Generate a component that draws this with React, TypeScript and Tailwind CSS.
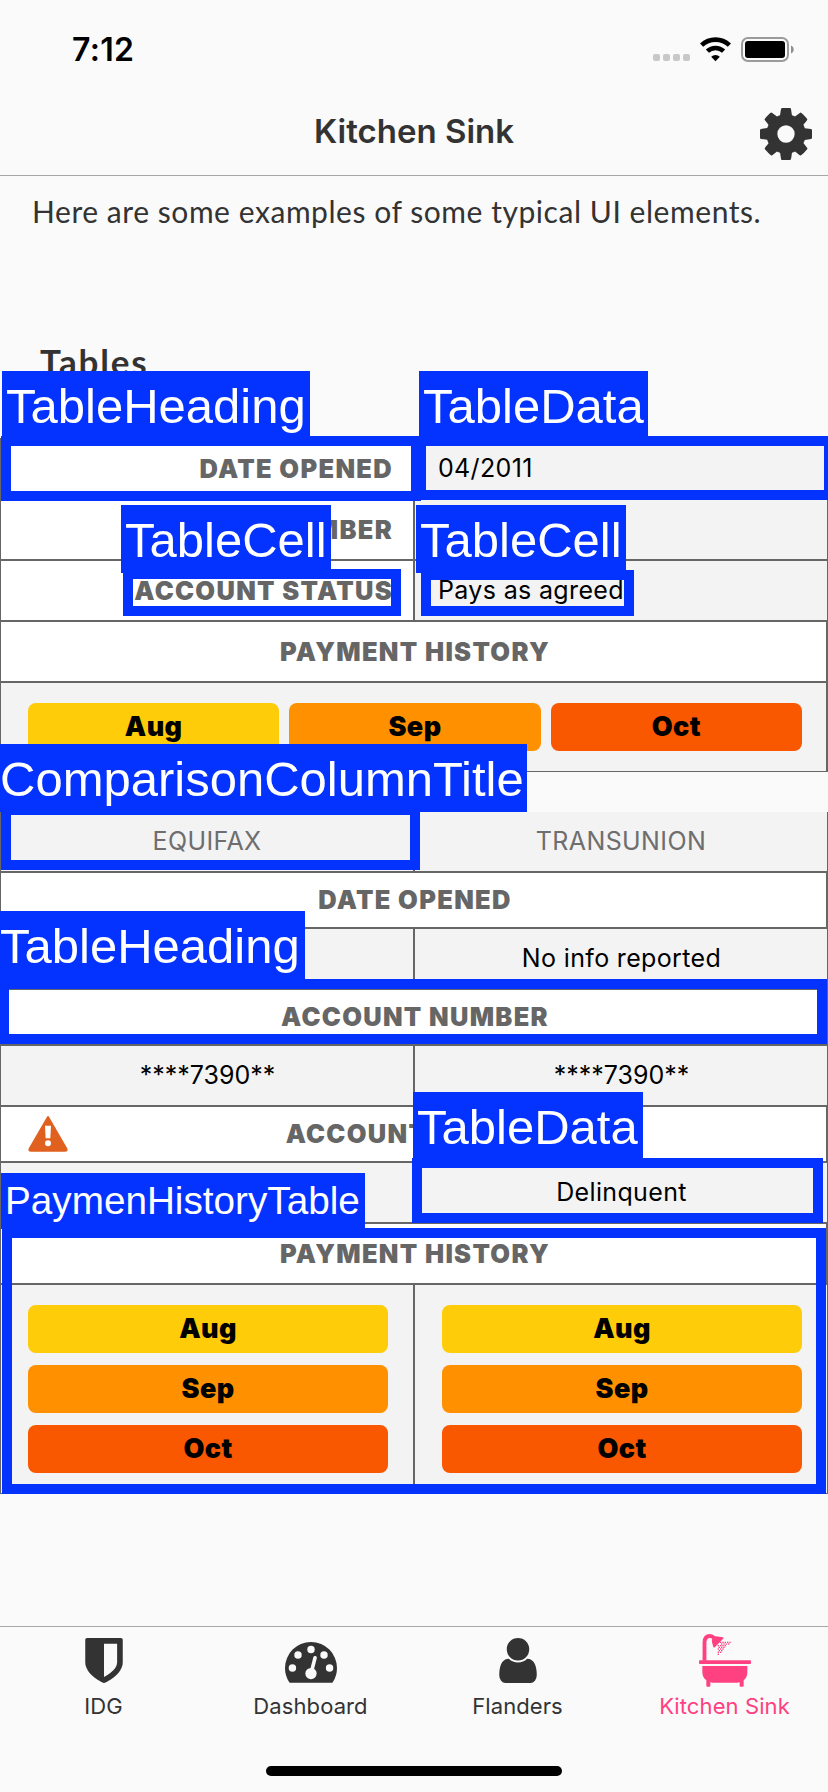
import type { ReactNode } from "react";

const INTER = "font-['Inter','Liberation_Sans',sans-serif]";

function StatusBar() {
  return (
    <div className="flex h-[88px] items-start justify-between pl-[72px] pr-[34px]">
      <span className="mt-[30px] text-[32px] font-semibold leading-[40px] tracking-[0.3px] text-black">7:12</span>
      <svg className="mt-[36px]" width="142" height="27" viewBox="652 36 142 27">
        {[653, 663, 673, 683].map((x) => (
          <rect key={x} x={x} y="54" width="7" height="7" rx="2" fill="#c8c8c8" />
        ))}
        <g fill="none" stroke="#000" strokeWidth="4.6">
          <path d="M701.6 45.2a20 20 0 0 1 27.8 0" />
          <path d="M707.4 51.2a11.8 11.8 0 0 1 16.2 0" />
        </g>
        <path d="M715.5 61.2l-4.3-4.4a6.2 6.2 0 0 1 8.6 0z" fill="#000" />
        <rect x="742" y="38" width="46" height="23" rx="6" fill="none" stroke="#9b9b9b" strokeWidth="2" />
        <rect x="745" y="41" width="40" height="17" rx="3" fill="#000" />
        <path d="M791 45.5c3.6 1.2 3.6 6.8 0 8z" fill="#8f8f8f" />
      </svg>
    </div>
  );
}

function CogIcon() {
  return (
    <svg width="52" height="52" viewBox="0 128 1536 1536" fill="#333">
      <path d="M1024 896q0-106-75-181t-181-75-181 75-75 181 75 181 181 75 181-75 75-181zm512-109v222q0 12-8 23t-20 13l-185 28q-19 54-39 91 35 50 107 138 10 12 10 25t-9 23q-27 37-99 108t-94 71q-12 0-26-9l-138-108q-44 23-91 38-16 136-29 186-7 28-36 28h-222q-14 0-24.5-8.5t-11.5-21.5l-28-184q-49-16-90-37l-141 107q-10 9-25 9-14 0-25-11-126-114-165-168-7-10-7-23 0-12 8-23 15-21 51-66.5t54-70.5q-27-50-41-99l-183-27q-13-2-21-12.5t-8-23.5v-222q0-12 8-23t19-13l186-28q14-46 39-92-40-57-107-138-10-12-10-24 0-10 9-23 26-36 98.5-107.5t94.5-71.5q13 0 26 10l138 107q44-23 91-38 16-136 29-186 7-28 36-28h222q14 0 24.5 8.5t11.5 21.5l28 184q49 16 90 37l142-107q9-9 24-9 13 0 25 10 129 119 165 170 7 8 7 22 0 12-8 23-15 21-51 66.5t-54 70.5q26 50 41 98l183 28q13 2 21 12.5t8 23.5z" />
    </svg>
  );
}

function ShieldIcon() {
  return (
    <svg width="38" height="45" viewBox="128 0 1280 1536" fill="#333">
      <path d="M1216 832v-640h-448v1137q119-63 213-137 235-184 235-360zm192-768v768q0 86-33.5 170.5t-83 150-118 127.5-126.5 103-121 77.5-89.5 49.5-42.5 20q-12 6-26 6t-26-6q-16-7-42.5-20t-89.5-49.5-121-77.5-126.5-103-118-127.5-83-150-33.5-170.5v-768q0-26 19-45t45-19h1152q26 0 45 19t19 45z" />
    </svg>
  );
}

function GaugeIcon() {
  return (
    <svg width="52" height="41" viewBox="0 128 1792 1413" fill="#333">
      <path d="M1792 1024q0 261-141 483-19 29-54 29h-1402q-35 0-54-29-141-221-141-483 0-182 71-348t191-286 286-191 348-71 348 71 286 191 191 286 71 348z" />
      <g fill="#fafafa">
        <circle cx="256" cy="1024" r="128" />
        <circle cx="448" cy="576" r="128" />
        <circle cx="896" cy="384" r="128" />
        <circle cx="1344" cy="576" r="128" />
        <circle cx="1536" cy="1024" r="128" />
        <circle cx="896" cy="1216" r="194" />
      </g>
      <path d="M925 1100L1036 672" stroke="#fafafa" strokeWidth="124" strokeLinecap="round" />
    </svg>
  );
}

function UserIcon() {
  return (
    <svg width="38" height="45" viewBox="0 0 1280 1536" fill="#333">
      <path d="M1280 1271q0 109-62.5 187t-150.5 78h-854q-88 0-150.5-78t-62.5-187q0-85 8.5-160.5t31.5-152 58.5-131 94-89 134.5-34.5q131 128 313 128t313-128q76 0 134.5 34.5t94 89 58.5 131 31.5 152 8.5 160.5zm-256-887q0 159-112.5 271.5t-271.5 112.5-271.5-112.5-112.5-271.5 112.5-271.5 271.5-112.5 271.5 112.5 112.5 271.5z" />
    </svg>
  );
}

const DROPS: [number, number][] = [
  [93, 25], [86, 25], [79, 25], [72, 25], [65, 25],
  [89, 30], [82, 30], [75, 30], [68, 30],
  [79, 35], [72, 35], [65, 35], [58, 35],
  [75, 40], [68, 40], [61, 40],
  [72, 45], [65, 45], [58, 45],
  [68, 50], [61, 50],
  [65, 55], [58, 55], [58, 61],
];

function BathIcon() {
  return (
    <svg width="52" height="53" viewBox="0 0 156 159" fill="#ff4081">
      <rect x="0" y="79" width="156" height="11" rx="3" />
      <path d="M10 96h135v18q0 16-11 25v16q0 3-3 3h-6q-3 0-3-3v-10q-3 1-8 1H42q-5 0-8-1v10q0 3-3 3h-6q-3 0-3-3v-16q-12-9-12-25z" />
      <path d="M16.500 80V26Q16.500 6 33 6Q40 6 45 12" fill="none" stroke="#ff4081" strokeWidth="11.500" />
      <path d="M42 10q8-5 18-2l12 2 2 3-28 28-3-2-4-14q-1-9 3-15z" />
      {DROPS.map(([x, y]) => (
        <rect key={`${x}-${y}`} x={x - 2} y={y - 2} width="4" height="4" />
      ))}
    </svg>
  );
}

function WarningIcon() {
  return (
    <svg className="absolute left-[26px] top-[8px]" width="42" height="38" viewBox="0 0 126 114">
      <path d="M63 6L8 101q-3 6 4 6h102q7 0 4-6z" fill="#e0611f" stroke="#e0611f" strokeWidth="6" strokeLinejoin="round" />
      <path d="M54 32h18l-2 38H56z" fill="#fff" />
      <circle cx="63" cy="85" r="9" fill="#fff" />
    </svg>
  );
}

const HEAD_TEXT = "text-[25.5px] font-black tracking-[1.3px] text-[#666]";

function SideRow({ title, value }: { title: string; value?: string }) {
  return (
    <div className="grid h-[61px] grid-cols-2">
      <div className={`flex items-center justify-end border border-[#666] bg-white pr-[20px] pt-px ${HEAD_TEXT}`}>{title}</div>
      <div className="flex items-center border border-[#666] bg-[#f3f3f3] pl-[23px] pt-px text-[25px] tracking-[0.35px] text-black">{value}</div>
    </div>
  );
}

function FullHeading({ children, tall, warn }: { children: ReactNode; tall?: boolean; warn?: boolean }) {
  return (
    <div className={`relative flex items-center justify-center border border-r-2 border-[#666] bg-white pl-[3px] pt-px ${HEAD_TEXT} ${tall ? "h-[61px]" : "h-[56px]"}`}>
      {warn && <WarningIcon />}
      {children}
    </div>
  );
}

function PairRow({ left, right, masked }: { left?: string; right: string; masked?: boolean }) {
  return (
    <div className={`grid h-[61px] grid-cols-2 text-[25px] text-black ${masked ? "" : "tracking-[0.35px]"}`}>
      <div className="flex items-center justify-center border border-[#666] bg-[#f3f3f3] pl-px pt-px">{left}</div>
      <div className="flex items-center justify-center border border-[#666] bg-[#f3f3f3] pl-px pt-px">{right}</div>
    </div>
  );
}

function Months({ stacked }: { stacked?: boolean }) {
  const pill = "flex h-[48px] flex-1 items-center justify-center rounded-[8px] text-[27px] font-black tracking-[0.4px] text-black";
  return (
    <div className={stacked ? "grid gap-[12px]" : "flex w-full gap-[10px]"}>
      <div className={`${pill} bg-[#fecc09]`}>Aug</div>
      <div className={`${pill} bg-[#ff9100]`}>Sep</div>
      <div className={`${pill} bg-[#f95700]`}>Oct</div>
    </div>
  );
}

function Tab({ icon, label, active }: { icon: ReactNode; label: string; active?: boolean }) {
  return (
    <div className={`flex flex-col items-center text-[22px] tracking-[0.1px] ${active ? "text-[#ff4081]" : "text-[#333]"}`}>
      <div className={`flex h-[60px] flex-col items-center justify-end ${active ? "" : "pb-[4px]"}`}>{icon}</div>
      <span className="mt-[4px] leading-[30px]">{label}</span>
    </div>
  );
}

const LABEL = "absolute overflow-hidden whitespace-nowrap bg-[#0433ff] text-white font-['Liberation_Sans',Arial,sans-serif]";
const FRAME = "absolute border-[10px] border-[#0433ff]";

function Annotations() {
  return (
    <>
      <div className={`${FRAME} left-px top-[435.5px] h-[65px] w-[420px]`} />
      <div className={`${FRAME} left-[416px] top-[436px] h-[64px] w-[418px]`} />
      <div className={`${FRAME} left-[123px] top-[569px] h-[47px] w-[278px]`} />
      <div className={`${FRAME} left-[421px] top-[570px] h-[46px] w-[213px]`} />
      <div className={`${FRAME} left-px top-[805px] h-[65px] w-[419px]`} />
      <div className={`${FRAME} left-[-1px] top-[979px] h-[65px] w-[828px]`} />
      <div className={`${FRAME} left-[412px] top-[1158px] h-[65px] w-[411px]`} />
      <div className={`${FRAME} left-[2px] top-[1228px] h-[266px] w-[824px]`} />
      <div className={`${LABEL} left-[2px] top-[371px] h-[66px] w-[308px] pl-[4px] text-[49px] leading-[70px]`}>TableHeading</div>
      <div className={`${LABEL} left-[419px] top-[370.5px] h-[66px] w-[229px] pl-[4px] text-[49px] leading-[70px]`}>TableData</div>
      <div className={`${LABEL} left-[121px] top-[505px] h-[68px] w-[210px] pl-[4px] text-[49px] leading-[70px]`}>TableCell</div>
      <div className={`${LABEL} left-[416px] top-[505px] h-[68px] w-[210px] pl-[4px] text-[49px] leading-[70px]`}>TableCell</div>
      <div className={`${LABEL} left-0 top-[744px] h-[68px] w-[527px] pl-0 text-[49px] leading-[70px]`}>ComparisonColumnTitle</div>
      <div className={`${LABEL} left-0 top-[911px] h-[68px] w-[304.5px] pl-0 text-[49px] leading-[71px]`}>TableHeading</div>
      <div className={`${LABEL} left-[413px] top-[1092px] h-[68px] w-[230px] pl-[4px] text-[49px] leading-[70px]`}>TableData</div>
      <div className={`${LABEL} left-px top-[1172.5px] h-[56px] w-[364px] pl-[4px] text-[38.7px] leading-[56px]`}>PaymenHistoryTable</div>
    </>
  );
}

export default function App() {
  return (
    <div className={`relative flex h-[1792px] w-[828px] flex-col overflow-hidden bg-[#fafafa] ${INTER}`}>
      <header className="h-[176px] border-b border-[#a7a7a7]">
        <StatusBar />
        <div className="grid h-[87px] grid-cols-[1fr_auto_1fr] pr-[16px]">
          <span />
          <h1 className="ml-[16px] pt-[22px] text-[33px] font-[560] leading-[42px] tracking-[0px] text-[#333]">Kitchen Sink</h1>
          <div className="flex justify-end pt-[20px]">
            <CogIcon />
          </div>
        </div>
      </header>

      <main className="flex-1">
        <div className="h-[262px] text-[#333] font-['Lato',sans-serif]">
          <p className="whitespace-nowrap pl-[32px] pt-[15px] text-[30px] leading-[40px] tracking-[0.55px]">Here are some examples of some typical UI elements.</p>
          <h2 className="pl-[40px] pt-[110px] text-[35px] font-bold leading-[40px] tracking-[1.8px]">Tables</h2>
        </div>

        <section>
          <SideRow title="DATE OPENED" value="04/2011" />
          <SideRow title="ACCOUNT NUMBER" />
          <SideRow title="ACCOUNT STATUS" value="Pays as agreed" />
          <FullHeading tall>PAYMENT HISTORY</FullHeading>
          <div className="flex h-[90px] items-center border border-r-2 border-[#666] bg-[#f3f3f3] pl-[27px] pr-[24px]">
            <Months />
          </div>
        </section>

        <section className="mt-[40px]">
          <div className="grid h-[60px] grid-cols-2 text-[25px] tracking-[0.4px] text-[#6e6e6e]">
            <div className="flex items-center justify-center border border-t-0 border-[#666] bg-[#f3f3f3] pt-px">EQUIFAX</div>
            <div className="flex items-center justify-center border border-t-0 border-[#666] bg-[#f3f3f3] pt-px">TRANSUNION</div>
          </div>
          <FullHeading>DATE OPENED</FullHeading>
          <PairRow right="No info reported" />
          <FullHeading>ACCOUNT NUMBER</FullHeading>
          <PairRow masked left="****7390**" right="****7390**" />
          <FullHeading warn>ACCOUNT STATUS</FullHeading>
          <PairRow right="Delinquent" />
          <FullHeading tall>PAYMENT HISTORY</FullHeading>
          <div className="grid h-[210px] grid-cols-2">
            <div className="border border-[#666] bg-[#f3f3f3] pl-[27px] pr-[25px] pt-[20px]">
              <Months stacked />
            </div>
            <div className="border border-[#666] bg-[#f3f3f3] pl-[27px] pr-[25px] pt-[20px]">
              <Months stacked />
            </div>
          </div>
        </section>
      </main>

      <footer className="flex h-[166px] flex-col items-center border-t border-[#a7a7a7]">
        <nav className="grid w-full grid-cols-4">
          <Tab icon={<ShieldIcon />} label="IDG" />
          <Tab icon={<GaugeIcon />} label="Dashboard" />
          <Tab icon={<UserIcon />} label="Flanders" />
          <Tab icon={<BathIcon />} label="Kitchen Sink" active />
        </nav>
        <div className="mt-[45px] h-[10px] w-[296px] rounded-full bg-black" />
      </footer>

      <Annotations />
    </div>
  );
}
